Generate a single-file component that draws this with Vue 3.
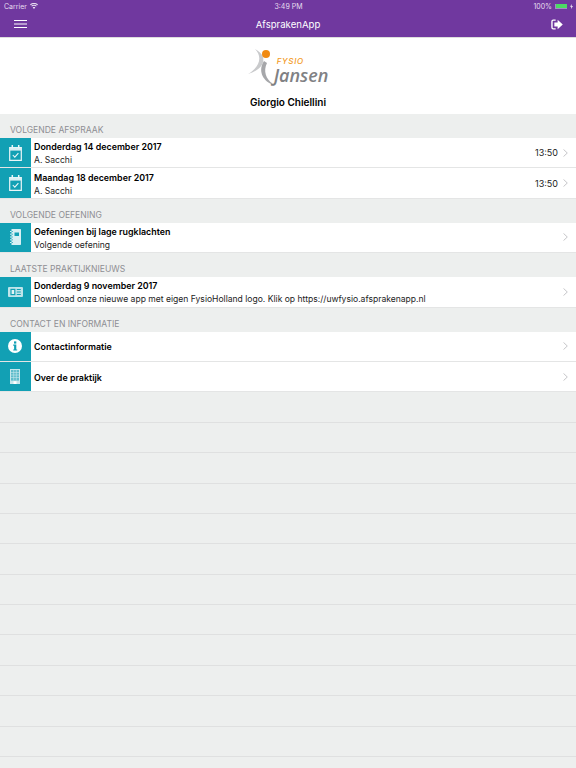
<template>
  <div class="app">
    <header class="topbar">
      <div class="status">
        <div class="status-left">
          <span>Carrier</span>
          <svg width="8" height="6" viewBox="0 0 18 13"><path d="M9 13 L6 9.6 C7.8 8.2 10.2 8.2 12 9.6 Z M4.4 7.8 L2.8 6 C6.2 3 11.8 3 15.2 6 L13.6 7.8 C11 5.6 7 5.6 4.4 7.8 Z M1.6 4.8 L0 3 C5 -1 13 -1 18 3 L16.4 4.8 C12.2 1.4 5.8 1.4 1.6 4.8 Z" fill="#e8dff0"/></svg>
        </div>
        <span class="status-time">3:49 PM</span>
        <div class="status-right">
          <span>100%</span>
          <span class="battery"><span class="battery-fill"></span></span>
          <svg width="3" height="5" viewBox="0 0 6 10"><path d="M3.5 0 L0 5.6 H2.4 L2 10 L6 3.8 H3.4 Z" fill="#e8dff0"/></svg>
        </div>
      </div>
      <div class="nav">
        <svg class="menu" width="13" height="8" viewBox="0 0 13 8"><path d="M0 .5H13M0 4H13M0 7.5H13" stroke="#fff" stroke-width="1"/></svg>
        <span class="nav-title">AfsprakenApp</span>
        <svg class="logout" width="12" height="11" viewBox="0 0 13 12">
          <path d="M5 1.2H2.4C1.5 1.2 1 1.8 1 2.6V9.4C1 10.2 1.5 10.8 2.4 10.8H5" fill="none" stroke="#fff" stroke-width="1.5"/>
          <path d="M7.2 .8 L12.8 6 L7.2 11.2 V8.2 H3.6 V3.8 H7.2 Z" fill="#fff"/>
        </svg>
      </div>
    </header>

    <div class="profile">
      <div class="logo">
        <svg class="logo-mark" width="30" height="38" viewBox="0 0 30 38">
          <path d="M7 1 C14 8 13 18 0 26 C10 23 17 17 15 9 C14 6 11 3 7 1 Z" fill="#c9cacc"/>
          <path d="M16 13 C10 22 14 32 24 36.5 C25 37 25.5 36 24.5 35.5 C18 31 15 23 19 15 Z" fill="#a6a7aa"/>
          <circle cx="18" cy="6" r="4" fill="#f08a12"/>
        </svg>
        <div class="logo-text">
          <span class="logo-fysio">FYSIO</span>
          <span class="logo-jansen">Jansen</span>
        </div>
      </div>
      <div class="profile-name">Giorgio Chiellini</div>
    </div>

    <section v-for="s in sections" :key="s.title">
      <h2 class="section-title">{{ s.title }}</h2>
      <div v-for="r in s.rows" :key="r.title" class="row">
        <div class="row-icon">
          <svg v-if="r.icon === 'calendar'" width="13" height="16" viewBox="0 0 13 16" fill="none">
            <path d="M.7 2.7H12.3V15.3H.7Z" stroke="#eaf6f8" stroke-width="1.2"/>
            <path d="M.7 2.7H12.3V5.6H.7Z" fill="#d8eff3"/>
            <path d="M3.3 0V3.6M9.7 0V3.6" stroke="#eaf6f8" stroke-width="1.5"/>
            <path d="M3.8 10 L5.8 12.2 L9.4 8.2" stroke="#eaf6f8" stroke-width="1.1"/>
          </svg>
          <svg v-else-if="r.icon === 'book'" width="11" height="16" viewBox="0 0 11 16">
            <path d="M1.5 0H10C10.6 0 11 .4 11 1V15C11 15.6 10.6 16 10 16H1.5Z" fill="#d8eff3"/>
            <path d="M0 2.5H3M0 5.2H3M0 8H3M0 10.8H3M0 13.5H3" stroke="#d8eff3" stroke-width="1"/>
            <path d="M1.5 2.5H3M1.5 5.2H3M1.5 8H3M1.5 10.8H3M1.5 13.5H3" stroke="#12a0b4" stroke-width=".7"/>
            <path d="M4.5 3.5H9V7H4.5Z" fill="#12a0b4"/>
          </svg>
          <svg v-else-if="r.icon === 'news'" width="15" height="10" viewBox="0 0 15 10">
            <rect width="15" height="10" rx="1" fill="#bfe4ea"/>
            <rect x="2.4" y="1.8" width="5" height="6.4" fill="#12a0b4"/>
            <rect x="3.6" y="3" width="2.6" height="4" fill="#e3f4f6"/>
            <path d="M8.8 2.5H12.8M8.8 5H12.8M8.8 7.5H12.8" stroke="#12a0b4" stroke-width="1"/>
          </svg>
          <svg v-else-if="r.icon === 'info'" width="14" height="14" viewBox="0 0 14 14">
            <circle cx="7" cy="7" r="7" fill="#fff"/>
            <rect x="6" y="2.4" width="2.3" height="2.2" fill="#12a0b4"/>
            <path d="M5.2 5.6H8.3V10.4H9.2V11.6H5.2V10.4H6.1V6.8H5.2Z" fill="#12a0b4"/>
          </svg>
          <svg v-else width="10" height="15" viewBox="0 0 10 15">
            <path d="M0 0H10V15H0Z" fill="#c6e7ec"/>
            <path d="M1 1H9V11.6H1Z" fill="#5dbccb"/>
            <path d="M1 3.5H9M1 6H9M1 8.5H9M3.7 1V11.6M6.3 1V11.6" stroke="#c6e7ec" stroke-width=".6"/>
            <path d="M3.5 12.2H6.5V15H3.5Z" fill="#fff"/>
          </svg>
        </div>
        <div class="row-text">
          <div class="row-title">{{ r.title }}</div>
          <div v-if="r.sub" class="row-sub">{{ r.sub }}</div>
        </div>
        <span v-if="r.time" class="row-time">{{ r.time }}</span>
        <svg class="chevron" width="5" height="8" viewBox="0 0 5 8"><path d="M.5 .4 L4.3 4 L.5 7.6" fill="none" stroke="#c5c5c8" stroke-width="1"/></svg>
      </div>
    </section>

    <div class="empty">
      <div v-for="n in 13" :key="n" class="empty-row"></div>
    </div>
  </div>
</template>

<script setup>
const sections = [
  {
    title: 'VOLGENDE AFSPRAAK',
    rows: [
      { icon: 'calendar', title: 'Donderdag 14 december 2017', sub: 'A. Sacchi', time: '13:50' },
      { icon: 'calendar', title: 'Maandag 18 december 2017', sub: 'A. Sacchi', time: '13:50' }
    ]
  },
  {
    title: 'VOLGENDE OEFENING',
    rows: [{ icon: 'book', title: 'Oefeningen bij lage rugklachten', sub: 'Volgende oefening' }]
  },
  {
    title: 'LAATSTE PRAKTIJKNIEUWS',
    rows: [
      {
        icon: 'news',
        title: 'Donderdag 9 november 2017',
        sub: 'Download onze nieuwe app met eigen FysioHolland logo. Klik op https://uwfysio.afsprakenapp.nl'
      }
    ]
  },
  {
    title: 'CONTACT EN INFORMATIE',
    rows: [
      { icon: 'info', title: 'Contactinformatie' },
      { icon: 'building', title: 'Over de praktijk' }
    ]
  }
]
</script>

<style>
html, body {
  background: #edefee;
}
</style>

<style scoped>
.app {
  width: 576px;
  height: 768px;
  overflow: hidden;
  background: #edefee;
  font-family: Inter, "Liberation Sans", sans-serif;
}
.topbar {
  height: 36.5px;
  background: #70389f;
  color: #fff;
}
.status {
  height: 12px;
  padding: 0 3px 0 4px;
  display: grid;
  grid-template-columns: 1fr auto 1fr;
  align-items: center;
  font-size: 7px;
  color: #e8dff0;
}
.status-left {
  display: flex;
  align-items: center;
  gap: 3px;
}
.status-right {
  display: flex;
  align-items: center;
  justify-content: flex-end;
  gap: 3px;
}
.battery {
  width: 12px;
  height: 5px;
  padding: .5px;
  box-sizing: border-box;
  background: #a58bc4;
  display: flex;
}
.battery-fill {
  flex: 1;
  background: #4cd964;
}
.nav {
  height: 24px;
  display: grid;
  grid-template-columns: 1fr auto 1fr;
  align-items: center;
  padding: 0 13.5px;
}
.menu {
  justify-self: start;
}
.logout {
  justify-self: end;
}
.nav-title {
  font-size: 9.6px;
}
.profile {
  height: 77.5px;
  background: #fff;
  border-top: 1px solid #ddd;
  box-sizing: border-box;
  display: flex;
  flex-direction: column;
  align-items: center;
}
.logo {
  margin-top: 10px;
  height: 38px;
  display: flex;
  align-items: flex-start;
}
.logo-mark {
  margin-right: -4px;
}
.logo-text {
  display: flex;
  flex-direction: column;
  margin-top: 9px;
}
.logo-fysio {
  font-size: 8px;
  font-style: italic;
  font-weight: 500;
  letter-spacing: .7px;
  color: #f39a1e;
  line-height: 9px;
  padding-left: 3px;
}
.logo-jansen {
  font-family: "Open Sans", sans-serif;
  font-size: 18px;
  font-style: italic;
  font-weight: 600;
  color: #808184;
  line-height: 19px;
}
.profile-name {
  margin-top: 10px;
  font-size: 10px;
  line-height: 13px;
  font-weight: 600;
  color: #000;
}
.section-title {
  margin: 0;
  height: 24px;
  padding: 10px 0 0 10px;
  box-sizing: border-box;
  font-size: 8.55px;
  line-height: 13px;
  font-weight: 400;
  color: #8e8e93;
}
.row {
  height: 30.4px;
  box-sizing: border-box;
  background: #fff;
  border-bottom: 1px solid #e4e5e5;
  display: flex;
  align-items: stretch;
}
.row-icon {
  width: 30.5px;
  flex: none;
  background: #12a0b4;
  display: flex;
  align-items: center;
  justify-content: center;
}
.row-text {
  flex: 1;
  min-width: 0;
  padding: 2px 0 0 3.5px;
  display: flex;
  flex-direction: column;
  justify-content: center;
  gap: 1px;
}
.row-title {
  font-size: 8.9px;
  line-height: 12px;
  font-weight: 600;
  color: #000;
}
.row-sub {
  font-size: 8.57px;
  line-height: 12px;
  color: #222;
}
.row-time {
  align-self: center;
  font-size: 9px;
  color: #222;
  margin-right: 4.5px;
}
.chevron {
  align-self: center;
  margin-right: 8.5px;
}
.empty-row {
  height: 30.4px;
  box-sizing: border-box;
  border-bottom: 1px solid #dfe0e0;
}
</style>
